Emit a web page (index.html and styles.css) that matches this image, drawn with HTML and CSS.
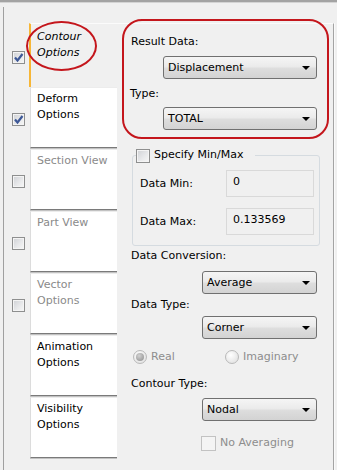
FILE: index.html
```html
<!DOCTYPE html>
<html>
<head>
<meta charset="utf-8">
<link rel="stylesheet" href="styles.css">
</head>
<body>
<div class="topbar"></div>
<div class="frame">
  <div class="tabcol">
    <div class="tabrow first">
      <div class="cbcell"><span class="cb"><svg class="check" viewBox="0 0 11 11" width="11" height="11"><path d="M2 5.5 L4.5 8.5 L9.5 2" fill="none" stroke="#3d5897" stroke-width="2.2"/></svg></span></div>
      <div class="tab active"><span class="tabtext italic">Contour<br>Options</span></div>
    </div>
    <div class="tabrow">
      <div class="cbcell"><span class="cb"><svg class="check" viewBox="0 0 11 11" width="11" height="11"><path d="M2 5.5 L4.5 8.5 L9.5 2" fill="none" stroke="#3d5897" stroke-width="2.2"/></svg></span></div>
      <div class="tab"><span class="tabtext">Deform<br>Options</span></div>
    </div>
    <div class="tabrow">
      <div class="cbcell"><span class="cb"></span></div>
      <div class="tab"><span class="tabtext dim">Section View</span></div>
    </div>
    <div class="tabrow">
      <div class="cbcell"><span class="cb"></span></div>
      <div class="tab"><span class="tabtext dim">Part View</span></div>
    </div>
    <div class="tabrow">
      <div class="cbcell"><span class="cb"></span></div>
      <div class="tab"><span class="tabtext dim">Vector<br>Options</span></div>
    </div>
    <div class="tabrow">
      <div class="cbcell"></div>
      <div class="tab"><span class="tabtext">Animation<br>Options</span></div>
    </div>
    <div class="tabrow">
      <div class="cbcell"></div>
      <div class="tab"><span class="tabtext">Visibility<br>Options</span></div>
    </div>
  </div>
  <div class="content">
    <div class="label l1">Result Data:</div>
    <div class="select wide s1"><span>Displacement</span><span class="arrow"></span></div>
    <div class="label l2">Type:</div>
    <div class="select wide s2"><span>TOTAL</span><span class="arrow"></span></div>
    <fieldset class="group">
      <legend class="legend"><span class="cb small"></span><span class="legend-text">Specify Min/Max</span></legend>
      <div class="datarow first-data"><span class="datalabel">Data Min:</span><span class="field">0</span></div>
      <div class="datarow"><span class="datalabel">Data Max:</span><span class="field">0.133569</span></div>
    </fieldset>
    <div class="label l3">Data Conversion:</div>
    <div class="select narrow s3"><span>Average</span><span class="arrow"></span></div>
    <div class="label l4">Data Type:</div>
    <div class="select narrow s4"><span>Corner</span><span class="arrow"></span></div>
    <div class="radios">
      <div class="radio-item real"><span class="radio on"></span><span class="dimtext">Real</span></div>
      <div class="radio-item imag"><span class="radio"></span><span class="dimtext">Imaginary</span></div>
    </div>
    <div class="label l5">Contour Type:</div>
    <div class="select narrow s5"><span>Nodal</span><span class="arrow"></span></div>
    <div class="noavg"><span class="cb disabled"></span><span class="dimtext">No Averaging</span></div>
  </div>
</div>
<div class="annot ellipse"></div>
<div class="annot roundrect"></div>
</body>
</html>
```
FILE: styles.css
```css
* { box-sizing: border-box; }
html, body { margin: 0; padding: 0; }
body {
  width: 337px;
  height: 470px;
  overflow: hidden;
  background: #f0f0f0;
  font-family: "DejaVu Sans", Verdana, sans-serif;
  font-size: 11px;
  line-height: 16px;
  color: #000;
  position: relative;
}
.topbar {
  height: 3px;
  background: linear-gradient(#a3a3a3 0, #a3a3a3 2px, #d4d4d4 2px);
}
.frame {
  margin-top: 4px;
  margin-left: 3px;
  border-left: 1px solid #a0a0a0;
  padding-top: 16px;
  height: 463px;
  display: flex;
}
.tabcol {
  width: 113px;
  display: flex;
  flex-direction: column;
}
.tabrow {
  display: flex;
  align-items: flex-start;
}
.cbcell {
  width: 26px;
  padding-left: 8px;
  display: flex;
  align-items: center;
  height: 62px;
  padding-top: 2px;
}
.tabrow.first .cbcell { height: 64px; padding-top: 4px; }
.cb {
  display: inline-flex;
  align-items: center;
  justify-content: center;
  width: 13px;
  height: 13px;
  border: 1px solid #8e8f8f;
  background: linear-gradient(135deg, #cfd1d5 0%, #e7e8ea 55%, #f7f7f7 100%);
  box-shadow: inset 0 0 0 1px #f4f4f4;
}
.cb .check { display: block; }
.cb.small { width: 14px; height: 14px; }
.cb.disabled {
  border-color: #c2c2c2;
  background: #f4f4f4;
  box-shadow: none;
  width: 15px;
  height: 15px;
}
.tab {
  width: 87px;
  height: 61px;
  margin-bottom: 1px;
  background: #fff;
  border-left: 1px solid #dcdcdc;
  border-top: 1px solid #ececec;
  border-bottom: 1px solid #7a7a7a;
  box-shadow: 0 1px 0 #c2c2c2;
  padding: 3px 0 0 6px;
}
.tab.active {
  width: 88px;
  height: 64px;
  margin-left: -1px;
  margin-bottom: 0;
  background: transparent;
  border-left: 2px solid #f7b636;
  border-top: 1px solid #fbfbfb;
  border-bottom: none;
  box-shadow: none;
  padding-top: 5px;
}
.tabtext { display: block; }
.italic { font-style: italic; }
.dim { color: #8a8a8a; }

.content {
  width: 217px;
  border-top: 1px solid #fbfbfb;
  border-right: 1px solid #a4a4a4;
  box-shadow: 1px 0 0 #fafafa;
  padding: 0 16px 0 14px;
  display: flex;
  flex-direction: column;
  align-items: flex-start;
}
.label { height: 16px; white-space: nowrap; }
.l1 { margin-top: 10px; }
.l2 { margin-top: 7px; margin-left: -1px; }
.l3 { margin-top: 2px; }
.l4 { margin-top: 3px; }
.l5 { margin-top: 11px; }

.select {
  height: 23px;
  border: 1px solid #707070;
  border-radius: 3px;
  background: linear-gradient(#f5f5f5 0%, #ebebeb 45%, #dddddd 55%, #d3d3d3 100%);
  display: flex;
  align-items: center;
  justify-content: space-between;
  padding: 0 6px 0 4px;
  white-space: nowrap;
}
.select.wide { width: 154px; margin-left: 32px; }
.select.narrow { width: 115px; align-self: flex-end; }
.s1 { margin-top: 6px; }
.s2 { margin-top: 5px; }
.s3 { margin-top: 7px; }
.s4 { margin-top: 3px; }
.s5 { margin-top: 6px; }
.arrow {
  width: 0;
  height: 0;
  border-left: 4px solid transparent;
  border-right: 4px solid transparent;
  border-top: 4px solid #000;
  margin-top: 1px;
}

.group {
  margin: 16px 0 0 1px;
  width: 188px;
  border: 1px solid #d5dbe0;
  border-radius: 3px;
  padding: 0 0 10px 7px;
  min-width: 0;
}
.legend {
  margin-left: -4px;
  padding: 0 11px 0 0;
  height: 18px;
  display: flex;
  align-items: center;
}
.legend .cb { margin-top: 2px; }
.legend-text { margin-left: 4px; }
.datarow {
  display: flex;
  align-items: center;
  height: 27px;
  margin-top: 11px;
}
.datarow.first-data { margin-top: 6px; }
.datalabel { width: 86px; }
.field {
  width: 88px;
  height: 27px;
  border: 1px solid #d9d9d9;
  background: #f0f0f0;
  padding: 3px 0 0 6px;
  align-self: stretch;
}

.radios {
  display: flex;
  margin-top: 10px;
  height: 16px;
  align-items: center;
  margin-left: 2px;
}
.radio-item { display: flex; align-items: center; }
.radio-item.real { width: 92px; }
.radio {
  width: 14px;
  height: 14px;
  border-radius: 50%;
  border: 1px solid #b9b9b9;
  background: radial-gradient(circle at 40% 35%, #ffffff, #e6e6e6 70%);
  margin-right: 4px;
  display: inline-flex;
  align-items: center;
  justify-content: center;
}
.radio.on::after {
  content: "";
  width: 8px;
  height: 8px;
  border-radius: 50%;
  background: radial-gradient(circle at 40% 35%, #d2d2d2, #8c8c8c);
}
.dimtext { color: #8d8d8d; }
.noavg {
  display: flex;
  align-items: center;
  align-self: flex-end;
  width: 115px;
  margin-top: 14px;
  height: 16px;
}
.noavg .cb { margin-right: 4px; margin-left: -1px; }

.annot {
  position: absolute;
  border: 2px solid #c4161c;
  pointer-events: none;
}
.ellipse {
  left: 26px;
  top: 21px;
  width: 71px;
  height: 50px;
  border-radius: 50%;
}
.roundrect {
  left: 122px;
  top: 19px;
  width: 207px;
  height: 120px;
  border-radius: 20px;
}
```
